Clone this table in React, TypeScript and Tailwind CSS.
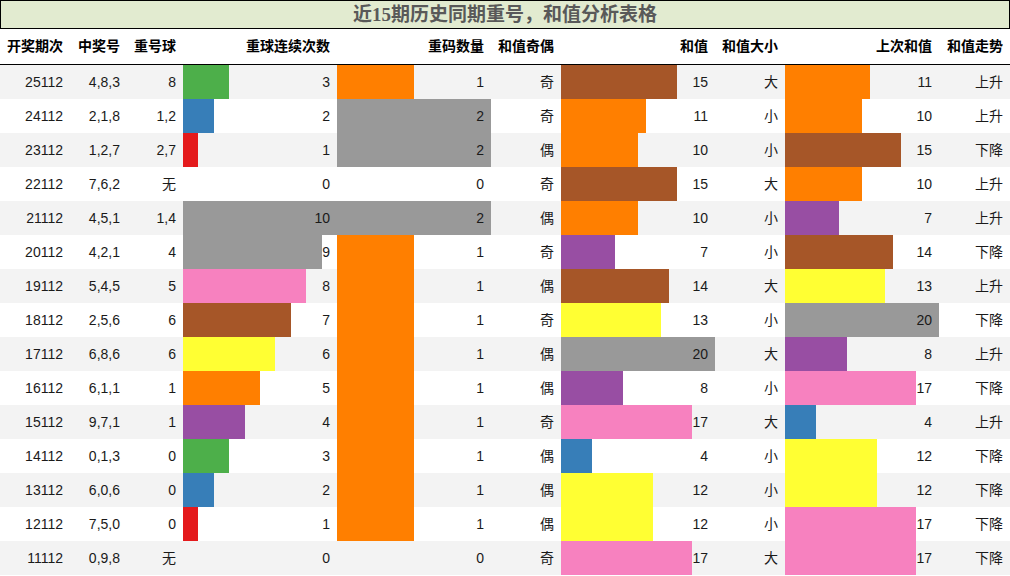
const C = {
  green: '#4daf4a',
  blue: '#377eb8',
  red: '#e41a1c',
  purple: '#984ea3',
  orange: '#ff7f00',
  yellow: '#ffff33',
  brown: '#a65628',
  pink: '#f781bf',
  gray: '#999999',
};

type Bar = [number, string];

type Row = {
  qi: string;
  hao: string;
  chong: string;
  lianxu: Bar;
  shuliang: Bar;
  jiou: string;
  hezhi: Bar;
  daxiao: string;
  shangci: Bar;
  zoushi: string;
};

const rows: Row[] = [
  { qi: '25112', hao: '4,8,3', chong: '8', lianxu: [3, C.green], shuliang: [1, C.orange], jiou: '奇', hezhi: [15, C.brown], daxiao: '大', shangci: [11, C.orange], zoushi: '上升' },
  { qi: '24112', hao: '2,1,8', chong: '1,2', lianxu: [2, C.blue], shuliang: [2, C.gray], jiou: '奇', hezhi: [11, C.orange], daxiao: '小', shangci: [10, C.orange], zoushi: '上升' },
  { qi: '23112', hao: '1,2,7', chong: '2,7', lianxu: [1, C.red], shuliang: [2, C.gray], jiou: '偶', hezhi: [10, C.orange], daxiao: '小', shangci: [15, C.brown], zoushi: '下降' },
  { qi: '22112', hao: '7,6,2', chong: '无', lianxu: [0, C.red], shuliang: [0, C.orange], jiou: '奇', hezhi: [15, C.brown], daxiao: '大', shangci: [10, C.orange], zoushi: '上升' },
  { qi: '21112', hao: '4,5,1', chong: '1,4', lianxu: [10, C.gray], shuliang: [2, C.gray], jiou: '偶', hezhi: [10, C.orange], daxiao: '小', shangci: [7, C.purple], zoushi: '上升' },
  { qi: '20112', hao: '4,2,1', chong: '4', lianxu: [9, C.gray], shuliang: [1, C.orange], jiou: '奇', hezhi: [7, C.purple], daxiao: '小', shangci: [14, C.brown], zoushi: '下降' },
  { qi: '19112', hao: '5,4,5', chong: '5', lianxu: [8, C.pink], shuliang: [1, C.orange], jiou: '偶', hezhi: [14, C.brown], daxiao: '大', shangci: [13, C.yellow], zoushi: '上升' },
  { qi: '18112', hao: '2,5,6', chong: '6', lianxu: [7, C.brown], shuliang: [1, C.orange], jiou: '奇', hezhi: [13, C.yellow], daxiao: '小', shangci: [20, C.gray], zoushi: '下降' },
  { qi: '17112', hao: '6,8,6', chong: '6', lianxu: [6, C.yellow], shuliang: [1, C.orange], jiou: '偶', hezhi: [20, C.gray], daxiao: '大', shangci: [8, C.purple], zoushi: '上升' },
  { qi: '16112', hao: '6,1,1', chong: '1', lianxu: [5, C.orange], shuliang: [1, C.orange], jiou: '偶', hezhi: [8, C.purple], daxiao: '小', shangci: [17, C.pink], zoushi: '下降' },
  { qi: '15112', hao: '9,7,1', chong: '1', lianxu: [4, C.purple], shuliang: [1, C.orange], jiou: '奇', hezhi: [17, C.pink], daxiao: '大', shangci: [4, C.blue], zoushi: '上升' },
  { qi: '14112', hao: '0,1,3', chong: '0', lianxu: [3, C.green], shuliang: [1, C.orange], jiou: '偶', hezhi: [4, C.blue], daxiao: '小', shangci: [12, C.yellow], zoushi: '下降' },
  { qi: '13112', hao: '6,0,6', chong: '0', lianxu: [2, C.blue], shuliang: [1, C.orange], jiou: '偶', hezhi: [12, C.yellow], daxiao: '小', shangci: [12, C.yellow], zoushi: '下降' },
  { qi: '12112', hao: '7,5,0', chong: '0', lianxu: [1, C.red], shuliang: [1, C.orange], jiou: '偶', hezhi: [12, C.yellow], daxiao: '小', shangci: [17, C.pink], zoushi: '下降' },
  { qi: '11112', hao: '0,9,8', chong: '无', lianxu: [0, C.red], shuliang: [0, C.orange], jiou: '奇', hezhi: [17, C.pink], daxiao: '大', shangci: [17, C.pink], zoushi: '下降' },
];

const headers = ['开奖期次', '中奖号', '重号球', '重球连续次数', '重码数量', '和值奇偶', '和值', '和值大小', '上次和值', '和值走势'];

const grid = 'grid grid-cols-[70px_57px_56px_154px_154px_70px_154px_70px_154px_71px]';
const font = { fontFamily: '"Liberation Sans", "Noto Sans CJK SC", sans-serif' };

const Cell = ({ children }: { children: React.ReactNode }) => (
  <div className="flex items-center justify-end pr-[7px]">{children}</div>
);

// bar fills the cell width proportionally to max
const BarCell = ({ bar, max }: { bar: Bar; max: number }) => (
  <div className="relative flex items-center justify-end pr-[7px]">
    {bar[0] > 0 && (
      <div
        className="absolute inset-y-0 left-0"
        style={{ width: `${(bar[0] / max) * 100}%`, backgroundColor: bar[1] }}
      />
    )}
    <span className="relative">{bar[0]}</span>
  </div>
);

export default function App() {
  return (
    <div className="w-[1010px] h-[576px] overflow-hidden bg-white text-[14px] text-[#1a1a1a]" style={font}>
      <div className="h-[29px] border border-black bg-[#e2ebd0] flex items-center justify-center">
        <span
          className="text-[19px] font-bold text-[#595959] leading-none"
          style={{ fontFamily: '"Liberation Serif", "Noto Sans CJK SC", serif' }}
        >
          近15期历史同期重号，和值分析表格
        </span>
      </div>

      <div className={`${grid} h-[36px] border-b border-black font-bold text-black`}>
        {headers.map((h) => (
          <Cell key={h}>{h}</Cell>
        ))}
      </div>

      {rows.map((r, i) => (
        <div key={r.qi} className={`${grid} h-[34px] ${i % 2 === 0 ? 'bg-[#f3f3f3]' : 'bg-white'}`}>
          <Cell>{r.qi}</Cell>
          <Cell>{r.hao}</Cell>
          <Cell>{r.chong}</Cell>
          <BarCell bar={r.lianxu} max={10} />
          <BarCell bar={r.shuliang} max={2} />
          <Cell>{r.jiou}</Cell>
          <BarCell bar={r.hezhi} max={20} />
          <Cell>{r.daxiao}</Cell>
          <BarCell bar={r.shangci} max={20} />
          <Cell>{r.zoushi}</Cell>
        </div>
      ))}
    </div>
  );
}
